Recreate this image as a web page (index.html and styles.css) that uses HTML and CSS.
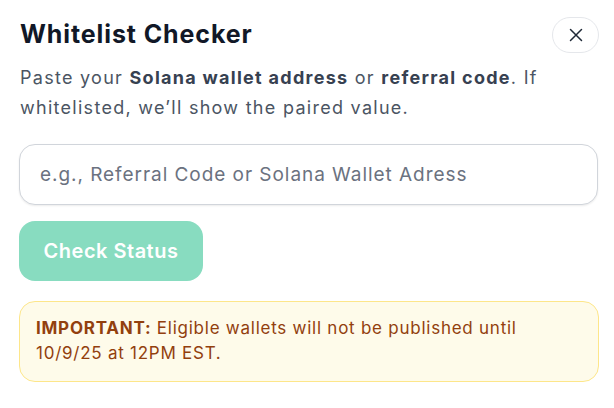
FILE: index.html
```html
<!DOCTYPE html>
<html lang="en">
<head>
<meta charset="utf-8">
<title>Whitelist Checker</title>
<link rel="stylesheet" href="styles.css">
</head>
<body>
<div class="modal">
  <div class="header">
    <h1 class="title">Whitelist Checker</h1>
    <button class="close" aria-label="Close">
      <svg width="14" height="14" viewBox="0 0 14 14"><path d="M1.5 1.5 L12.5 12.5 M12.5 1.5 L1.5 12.5" stroke="#1f2937" stroke-width="1.5" stroke-linecap="round" fill="none"/></svg>
    </button>
  </div>
  <p class="desc">Paste your <b>Solana wallet address</b> or <b>referral code</b>. If whitelisted, we’ll show the paired value.</p>
  <input class="field" type="text" placeholder="e.g., Referral Code or Solana Wallet Adress">
  <button class="check">Check Status</button>
  <div class="notice"><b>IMPORTANT:</b> Eligible wallets will not be published until 10/9/25 at 12PM EST.</div>
</div>
</body>
</html>
```
FILE: styles.css
```css
* { box-sizing: border-box; }
html, body { margin: 0; background: #ffffff; }
body { font-family: "Inter", "Noto Sans", sans-serif; }
.modal { padding: 17px 15px 0 19px; display: flex; flex-direction: column; }
.header { display: flex; justify-content: space-between; align-items: center; height: 36px; }
.title { margin: -2px 0 0 1px; font-size: 25px; font-weight: 700; color: #111827; letter-spacing: 0.9px; }
.close { width: 47px; height: 36px; border: 1px solid #e5e7eb; border-radius: 18px; background: #fff; display: flex; align-items: center; justify-content: center; padding: 0; }
.desc { margin: 10px 0 0 1px; width: 560px; font-size: 18px; line-height: 30px; color: #4b5563; letter-spacing: 1.28px; }
.desc b { font-weight: 700; color: #374151; }
.field { margin-top: 21px; height: 61px; width: 579px; border: 1px solid #d1d5db; border-radius: 16px; padding: 0 20px; font-family: inherit; font-size: 19px; letter-spacing: 0.95px; box-shadow: 0 1px 2px rgba(0,0,0,0.08); outline: none; }
.field::placeholder { color: #6b7280; }
.check { margin-top: 16px; width: 184px; height: 60px; border: none; border-radius: 16px; background: #88dcc0; color: #ffffff; font-family: inherit; font-size: 20px; font-weight: 600; letter-spacing: 0.5px; padding: 0; }
.notice { margin-top: 20px; width: 580px; border: 1px solid #fde68a; background: #fefbea; border-radius: 16px; padding: 14px 16px 15px; font-size: 17px; line-height: 25px; color: #92400e; letter-spacing: 0.75px; }
.notice b { font-weight: 700; }
```
